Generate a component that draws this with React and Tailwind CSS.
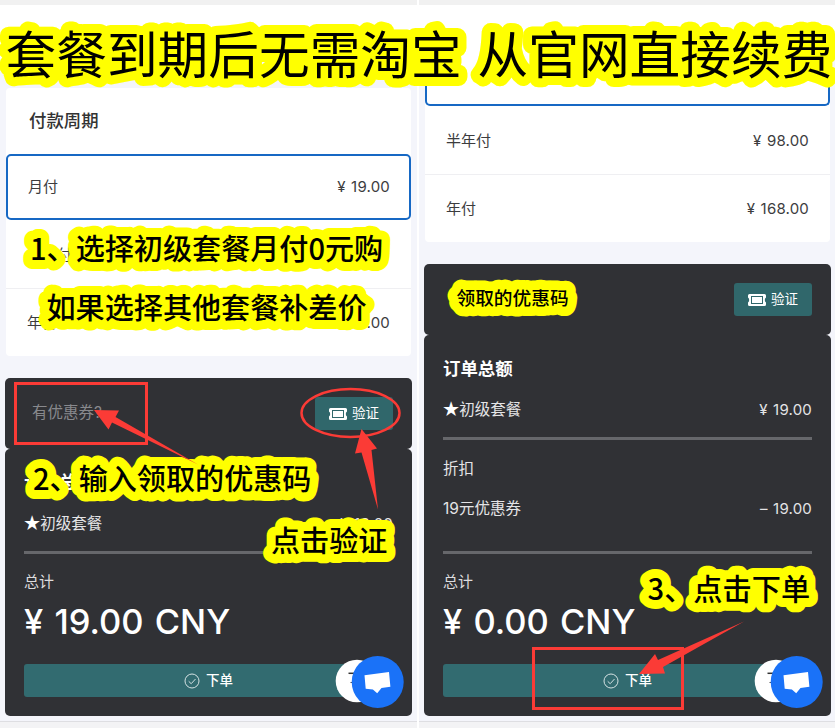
function TicketIcon() {
  return (
    <svg width="18" height="12" viewBox="0 0 18 12" className="shrink-0">
      <path
        fill="#fff"
        fillRule="evenodd"
        d="M1.500 0h15A1.500 1.500 0 0 1 18 1.500V3.600q-1.200 .6-1.200 2.400t1.200 2.400v2.100a1.500 1.500 0 0 1-1.500 1.500h-15A1.500 1.500 0 0 1 0 10.500V8.400q1.200-.6 1.200-2.400T0 3.600V1.500A1.500 1.500 0 0 1 1.500 0ZM3 2v8h12V2Z"
      />
      <rect x="4" y="3" width="10" height="6" fill="#fff" />
    </svg>
  );
}

function CheckIcon() {
  return (
    <svg width="16" height="16" viewBox="0 0 16 16" fill="none" stroke="#d5e2e3" strokeWidth="1">
      <circle cx="8" cy="8" r="7" />
      <path d="M4.700 8.300l2.500 2.400 4.300-4.700" />
    </svg>
  );
}

function ChatWidget() {
  return (
    <svg className="absolute left-[334px] top-[654px]" width="72" height="56" viewBox="0 0 72 56">
      <circle cx="23" cy="27" r="21.300" fill="#fff" />
      <path d="M14.500 19.300h6" stroke="#333" strokeWidth="1.500" />
      <path d="M16.500 28.500h2" stroke="#555" strokeWidth="1" />
      <circle cx="43.700" cy="28" r="26" fill="#1a72f8" />
      <path d="M30.500 21.200L55 18l1.400 14.800-8.900 1.300-4.300 5.200-4.300-3.900-7.200-.7Z" fill="#fff" />
    </svg>
  );
}

function PlanRow({ label, price, className }) {
  return (
    <div className={`flex items-center justify-between text-[15px] text-[#3c3c3e] ${className}`}>
      <span>{label}</span>
      <span className="tracking-[0.2px] [word-spacing:1px]">{price}</span>
    </div>
  );
}

function SummaryRow({ label, value, className }) {
  return (
    <div className={`flex h-5 items-center justify-between text-[15px] leading-5 text-[#e4e4e6] ${className}`}>
      <span className="text-[15.500px]">{label}</span>
      <span className="tracking-[0.2px] [word-spacing:1px]">{value}</span>
    </div>
  );
}

const StarredPlan = () => (
  <>
    <span className="inline-block scale-[1.15] text-white">★</span>初级套餐
  </>
);

function Coupon({ placeholder }) {
  return (
    <div className="flex h-[71px] items-center justify-between rounded-[5px] bg-[#303135] pl-[27px] pr-[19px]">
      <span className="pb-[2px] text-[15.500px] text-[#88898d]">{placeholder}</span>
      <button className="flex h-[33px] w-[78px] items-center justify-center gap-[5px] rounded-[3px] bg-[#30676b] text-[13.500px] text-white">
        <TicketIcon />
        验证
      </button>
    </div>
  );
}

function Total({ amount }) {
  return (
    <>
      <div className="text-[15px] leading-5 text-[#dcdcde]">总计</div>
      <div className="mt-[10px] whitespace-nowrap text-[34.500px] font-medium leading-10 text-white [word-spacing:2px]">
        {amount}
      </div>
      <button className="mt-[22px] flex h-[33px] w-full items-center justify-center gap-1.5 rounded-[3px] bg-[#326b70] text-[13.500px] font-medium text-white">
        <CheckIcon />
        下单
      </button>
    </>
  );
}

const Rule = ({ className }) => <div className={`h-[3px] bg-[#66676b] ${className}`} />;

function Note({ x, y, halo, className, children }) {
  return (
    <text
      x={x}
      y={y}
      strokeWidth={halo}
      className={`fill-black stroke-[#ff0] [paint-order:stroke_fill] [stroke-linecap:round] [stroke-linejoin:round] font-['Noto_Sans_CJK_SC',sans-serif] ${className}`}
    >
      {children}
    </text>
  );
}

function LeftPanel() {
  return (
    <section className="relative h-[728px] w-[417px] bg-[#f4f5fb]">
      <div className="h-[5px] bg-[#f1f1f1]" />
      <div className="h-[55px] bg-white" />
      <div className="mx-[6px] mt-[28px] h-[268px] w-[405px] rounded-[4px] bg-white">
        <h2 className="flex h-[66px] items-center pl-[23px] text-[17.400px] font-medium text-[#333]">
          付款周期
        </h2>
        <PlanRow label="月付" price="¥ 19.00" className="h-[66px] rounded-[5px] border-2 border-[#1668c4] pl-5 pr-[19px]" />
        <PlanRow label="半年付" price="¥ 98.00" className="h-[69px] border-b border-[#efeff2] px-[21px] pt-[2px]" />
        <PlanRow label="年付" price="¥ 168.00" className="h-[67px] px-[21px] pt-[2px]" />
      </div>
      <div className="ml-[5px] mt-[22px] w-[407px]">
        <Coupon placeholder="有优惠券?" />
        <div className="h-[267px] rounded-[5px] bg-[#303135] px-[19px] pt-[23px]">
          <h2 className="text-[17.400px] font-bold leading-5 text-white">订单总额</h2>
          <SummaryRow label={<StarredPlan />} value="¥ 19.00" className="mt-[22px]" />
          <Rule className="mt-[17px]" />
          <div className="h-[18px]" />
          <Total amount="¥ 19.00 CNY" />
        </div>
      </div>
      <div className="mt-[5px] h-[7px] border-t border-[#dedee2] bg-[#f3f3f5]" />
      <ChatWidget />
    </section>
  );
}

function RightPanel() {
  return (
    <section className="relative h-[728px] w-[416px] bg-[#f4f5fb]">
      <div className="h-[5px] bg-[#f1f1f1]" />
      <div className="h-[35px] bg-white" />
      <div className="ml-[6px] h-[202px] w-[405px] rounded-b-[4px] bg-white">
        <div className="h-[66px] rounded-b-[5px] border-2 border-t-0 border-[#1668c4]" />
        <PlanRow label="半年付" price="¥ 98.00" className="h-[69px] border-b border-[#efeff2] px-[21px] pt-[3px]" />
        <PlanRow label="年付" price="¥ 168.00" className="h-[67px] px-[21px] pt-[2px]" />
      </div>
      <div className="ml-[5px] mt-[22px] w-[407px]">
        <Coupon placeholder="" />
        <div className="h-[381px] rounded-[5px] bg-[#303135] px-[19px] pt-[24px]">
          <h2 className="text-[17.400px] font-bold leading-5 text-white">订单总额</h2>
          <SummaryRow label={<StarredPlan />} value="¥ 19.00" className="mt-[21px]" />
          <Rule className="mt-[17px]" />
          <SummaryRow label="折扣" value="" className="mt-[19px]" />
          <SummaryRow label="19元优惠券" value="– 19.00" className="mt-[20px]" />
          <Rule className="mt-[32px]" />
          <div className="h-[18px]" />
          <Total amount="¥ 0.00 CNY" />
        </div>
      </div>
      <div className="mt-[5px] h-[7px] border-t border-[#dedee2] bg-[#f3f3f5]" />
      <ChatWidget />
    </section>
  );
}

export default function App() {
  return (
    <main className="relative flex h-[728px] w-[835px] gap-[2px] overflow-hidden bg-white font-[Inter,'Noto_Sans_CJK_SC',sans-serif]">
      <LeftPanel />
      <RightPanel />

      <svg className="pointer-events-none absolute left-0 top-0" width="835" height="728" viewBox="0 0 835 728">
        <Note x="5.500" y="73.500" halo="18" className="text-[50.700px] [word-spacing:4.500px]">
          套餐到期后无需淘宝 从官网直接续费
        </Note>
        <Note x="30" y="259.500" halo="18" className="text-[29.100px] font-medium">1、选择初级套餐月付0元购</Note>
        <Note x="46.500" y="318.500" halo="18" className="text-[29.100px] font-medium">如果选择其他套餐补差价</Note>
        <Note x="33" y="489.500" halo="18" className="text-[29.100px] font-medium">2、输入领取的优惠码</Note>
        <Note x="271" y="551.500" halo="18" className="text-[29.100px] font-medium">点击验证</Note>
        <Note x="456.500" y="305" halo="19" className="text-[18.700px] font-medium">领取的优惠码</Note>
        <Note x="647.500" y="600" halo="18" className="text-[29.200px] font-medium">3、点击下单</Note>

        <g fill="none" stroke="#fb3b36">
          <rect x="15.500" y="383.500" width="131" height="60" strokeWidth="3" />
          <ellipse cx="350.500" cy="413" rx="49" ry="24" strokeWidth="2.500" />
          <rect x="533.500" y="648.500" width="149" height="60" strokeWidth="3" />
        </g>
        <g fill="#fb3b36">
          <path d="M94 410L119 410.500L115.500 417L198 464.500L112 422.500L108.500 429.500Z" />
          <path d="M361.500 429L377 448.500L371.500 450L378 509.500L361.500 452.500L355 453.500Z" />
          <path d="M639 674L655 654L658 660L744 621.500L663 667L665 673.500Z" />
        </g>
      </svg>
    </main>
  );
}
